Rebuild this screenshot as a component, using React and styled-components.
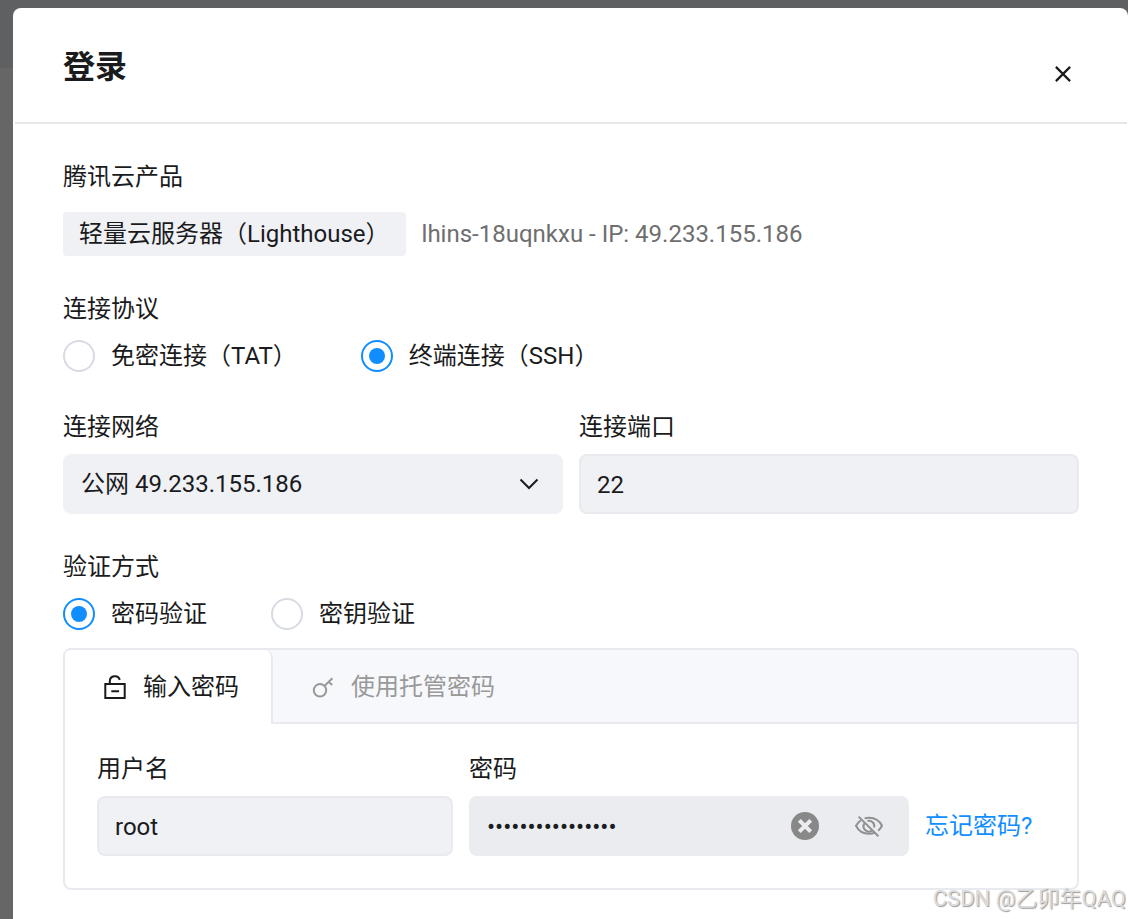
import { useState } from "react";
import styled, { createGlobalStyle } from "styled-components";

const text_color = "#1a1b1c";
const muted = "#6e6e6e";
const blue = "#108eff";
const line = "#e9eaef";
const field = "#f0f1f5";
const font = `Roboto, "Noto Sans CJK SC", sans-serif`;

const LockIcon = () => (
	<svg width='24' height='24' viewBox='0 0 24 24' fill='none' stroke='currentColor' strokeWidth='2'>
		<rect x='2.3' y='9' width='19.4' height='14' />
		<path d='M6.8 9V6.2a5.1 5.1 0 0 1 10-1.300' />
		<path d='M8.300 16.300h7.800' />
	</svg>
);

const KeyIcon = () => (
	<svg width='24' height='24' viewBox='0 0 24 24' fill='none' stroke='currentColor' strokeWidth='2'>
		<circle cx='9' cy='15.3' r='6.2' />
		<path d='M13.4 11l8-7.8M17.6 6.8l3.6 3.2' />
	</svg>
);

const CloseIcon = () => (
	<svg width='16' height='16' viewBox='0 0 16 16' fill='none' stroke='currentColor' strokeWidth='2.2'>
		<path d='M.9.9l14.2 14.2M15.1.9L.9 15.1' />
	</svg>
);

const ClearIcon = () => (
	<svg width='28' height='28' viewBox='0 0 28 28' fill='none'>
		<circle cx='14' cy='14' r='14' fill='#888888' />
		<path d='M8.3 8.3l11.4 11.4M19.7 8.3L8.3 19.7' stroke='#ebecf0' strokeWidth='4' />
	</svg>
);

const EyeOffIcon = () => (
	<svg width='28' height='28' viewBox='0 0 28 28' fill='none' stroke='currentColor' strokeWidth='2'>
		<path d='M3.6 4.6l19.8 19.6' />
		<path d='M9.6 6.4c1.4-.4 2.8-.6 4.4-.6 6.2 0 10.6 3.2 13 8-1 1.9-2.2 3.500-3.800 4.800' />
		<path d='M5.900 8.200C3.800 9.700 2.100 11.600 1 13.800c2.400 4.800 6.800 8 13 8 2.200 0 4.200-.4 6-1.200' />
		<path d='M9.600 11.200a5.300 5.300 0 0 0 7.400 7.400' />
		<path d='M12.500 9a5.300 5.300 0 0 1 6.600 6.400' />
	</svg>
);

const Choice = ({ name, label, checked, onChange }) => (
	<RadioLabel>
		<Radio type='radio' name={name} checked={checked} onChange={onChange} />
		{label}
	</RadioLabel>
);

const App = () => {
	const [protocol, setProtocol] = useState("ssh");
	const [auth, setAuth] = useState("password");
	const [tab, setTab] = useState("input");
	const [port, setPort] = useState("22");
	const [user, setUser] = useState("root");
	const [password, setPassword] = useState("abcdefgh12345678");
	const [visible, setVisible] = useState(false);

	return (
		<Page>
			<GlobalStyle />
			<Dialog role='dialog' aria-labelledby='title'>
				<Header>
					<Title id='title'>登录</Title>
					<CloseButton type='button' aria-label='关闭'>
						<CloseIcon />
					</CloseButton>
				</Header>
				<Body>
					<section>
						<Caption>腾讯云产品</Caption>
						<Product>
							<Chip>轻量云服务器（Lighthouse）</Chip>
							<Instance>lhins-18uqnkxu - IP: 49.233.155.186</Instance>
						</Product>
					</section>

					<section>
						<Caption>连接协议</Caption>
						<RadioGroup>
							<Choice
								name='protocol'
								label='免密连接（TAT）'
								checked={protocol === "tat"}
								onChange={() => setProtocol("tat")}
							/>
							<Choice
								name='protocol'
								label='终端连接（SSH）'
								checked={protocol === "ssh"}
								onChange={() => setProtocol("ssh")}
							/>
						</RadioGroup>
					</section>

					<Columns>
						<Field>
							<Label htmlFor='network'>连接网络</Label>
							<SelectBox>
								<Select id='network'>
									<option>公网 49.233.155.186</option>
								</Select>
								<Chevron width='20' height='12' viewBox='0 0 20 12'>
									<path d='M1.5 1.5l8.5 8.5 8.5-8.5' />
								</Chevron>
							</SelectBox>
						</Field>
						<Field>
							<Label htmlFor='port'>连接端口</Label>
							<Input id='port' value={port} onChange={(e) => setPort(e.target.value)} />
						</Field>
					</Columns>

					<section>
						<Caption>验证方式</Caption>
						<RadioGroup>
							<Choice
								name='auth'
								label='密码验证'
								checked={auth === "password"}
								onChange={() => setAuth("password")}
							/>
							<Choice
								name='auth'
								label='密钥验证'
								checked={auth === "key"}
								onChange={() => setAuth("key")}
							/>
						</RadioGroup>
						<Panel>
							<Tabs role='tablist'>
								<Tab
									type='button'
									role='tab'
									aria-selected={tab === "input"}
									$active={tab === "input"}
									onClick={() => setTab("input")}
								>
									<LockIcon />
									输入密码
								</Tab>
								<Tab
									type='button'
									role='tab'
									aria-selected={tab === "managed"}
									$active={tab === "managed"}
									onClick={() => setTab("managed")}
								>
									<KeyIcon />
									使用托管密码
								</Tab>
							</Tabs>
							<Credentials>
								<Field>
									<Label htmlFor='user'>用户名</Label>
									<Input id='user' value={user} onChange={(e) => setUser(e.target.value)} />
								</Field>
								<Field>
									<Label htmlFor='password'>密码</Label>
									<PasswordBox>
										<PasswordInput
											id='password'
											type={visible ? "text" : "password"}
											value={password}
											onChange={(e) => setPassword(e.target.value)}
										/>
										<IconButton type='button' aria-label='清除' onClick={() => setPassword("")}>
											<ClearIcon />
										</IconButton>
										<IconButton
											type='button'
											aria-label='显示密码'
											onClick={() => setVisible(!visible)}
										>
											<EyeOffIcon />
										</IconButton>
									</PasswordBox>
								</Field>
								<Forgot href='#forgot'>忘记密码?</Forgot>
							</Credentials>
						</Panel>
					</section>
				</Body>
			</Dialog>
			<Watermark>CSDN @乙卯年QAQ</Watermark>
		</Page>
	);
};

export default App;

const GlobalStyle = createGlobalStyle`
	* {
		box-sizing: border-box;
	}
	body {
		margin: 0;
		color: ${text_color};
		font-family: ${font};
		font-size: 24px;
		line-height: 40px;
	}
	svg {
		display: block;
		flex: none;
	}
	input, select, button {
		margin: 0;
		font: inherit;
		color: inherit;
	}
`;

const Page = styled.div`
	position: relative;
	display: flex;
	min-height: 100vh;
	padding: 8px 0 0 13px;
	background: linear-gradient(#5f6062 68px, #666666 68px);
`;

const Dialog = styled.main`
	flex: 1;
	min-width: 0;
	background: #ffffff;
	border-radius: 8px 8px 0 0;
`;

const Header = styled.header`
	display: flex;
	align-items: flex-end;
	justify-content: space-between;
	margin: 0 1px 0 2px;
	padding: 36px 48px 32px;
	border-bottom: 2px solid #e5e7eb;
`;

const Title = styled.h1`
	margin: 0;
	font-size: 32px;
	font-weight: 700;
	line-height: 46px;
`;

const CloseButton = styled.button`
	display: grid;
	place-items: center;
	width: 32px;
	height: 32px;
	padding: 0;
	border: none;
	background: transparent;
	cursor: pointer;
`;

const Body = styled.div`
	display: flex;
	flex-direction: column;
	gap: 32px;
	padding: 32px 49px 24px 50px;
`;

const Caption = styled.div`
	padding-top: 2px;
	line-height: 38px;
`;

const Label = styled.label`
	display: block;
	padding-top: 2px;
	line-height: 38px;
`;

const Product = styled.div`
	display: flex;
	align-items: center;
	gap: 16px;
	margin-top: 16px;
`;

const Chip = styled.span`
	padding: 2px 16px;
	background: ${field};
	border-radius: 4px;
`;

const Instance = styled.span`
	color: ${muted};
`;

const RadioGroup = styled.div`
	display: flex;
	gap: 64px;
	margin-top: 12px;
	padding-bottom: 2px;
`;

const RadioLabel = styled.label`
	display: flex;
	align-items: center;
	gap: 16px;
	line-height: 32px;
	cursor: pointer;
`;

const Radio = styled.input`
	appearance: none;
	display: grid;
	place-items: center;
	width: 32px;
	height: 32px;
	border: 2px solid #d7dbe3;
	border-radius: 50%;
	&:checked {
		border-color: ${blue};
	}
	&:checked::before {
		content: "";
		width: 16px;
		height: 16px;
		border-radius: 50%;
		background: ${blue};
	}
`;

const Columns = styled.div`
	display: grid;
	grid-template-columns: 1fr 1fr;
	gap: 16px;
`;

const Field = styled.div`
	display: flex;
	flex-direction: column;
	gap: 8px;
	min-width: 0;
`;

const Input = styled.input`
	width: 100%;
	height: 60px;
	padding: 2px 16px 0;
	border: 2px solid ${line};
	border-radius: 8px;
	outline: none;
	background: ${field};
`;

const SelectBox = styled.div`
	display: grid;
	align-items: center;
`;

const Select = styled.select`
	grid-area: 1 / 1;
	appearance: none;
	width: 100%;
	height: 60px;
	padding: 0 56px 0 18px;
	border: none;
	border-radius: 8px;
	outline: none;
	background: ${field};
`;

const Chevron = styled.svg`
	grid-area: 1 / 1;
	justify-self: end;
	margin-right: 24px;
	fill: none;
	stroke: ${text_color};
	stroke-width: 2;
	pointer-events: none;
`;

const Panel = styled.div`
	margin-top: 16px;
	border: 2px solid ${line};
	border-radius: 8px;
	overflow: hidden;
`;

const Tabs = styled.div`
	display: flex;
	background: #f7f8fb;
	box-shadow: inset 0 -2px ${line};
`;

const Tab = styled.button`
	display: flex;
	align-items: center;
	gap: 16px;
	height: 74px;
	padding: 0 32px 0 38px;
	border: none;
	border-right: 2px solid ${(props) => (props.$active ? line : "transparent")};
	border-radius: 0 8px 0 0;
	background: ${(props) => (props.$active ? "#ffffff" : "transparent")};
	color: ${(props) => (props.$active ? text_color : "#999999")};
	cursor: pointer;
`;

const Credentials = styled.div`
	display: grid;
	grid-template-columns: 356fr 440fr 120px;
	align-items: end;
	gap: 16px;
	padding: 24px 32px 32px;
`;

const PasswordBox = styled.div`
	display: flex;
	align-items: center;
	gap: 36px;
	height: 60px;
	padding: 0 26px 0 18px;
	border-radius: 8px;
	background: #ebecf0;
`;

const PasswordInput = styled.input`
	flex: 1;
	min-width: 0;
	padding: 2px 0 0;
	border: none;
	outline: none;
	background: transparent;
`;

const IconButton = styled.button`
	padding: 0;
	border: none;
	background: transparent;
	color: #8f9092;
	cursor: pointer;
`;

const Forgot = styled.a`
	color: ${blue};
	line-height: 60px;
	text-decoration: none;
	white-space: nowrap;
`;

const Watermark = styled.div`
	position: absolute;
	right: 2px;
	bottom: 4px;
	font-size: 22px;
	line-height: 32px;
	color: #dcdcdc;
	text-shadow: 1px 1px 1px #999999;
	pointer-events: none;
`;
